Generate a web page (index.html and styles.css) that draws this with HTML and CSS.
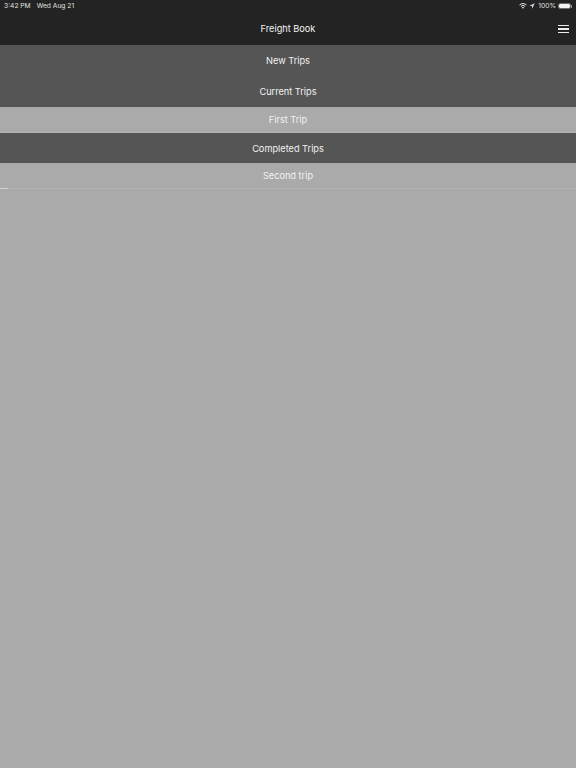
FILE: index.html
```html
<!DOCTYPE html>
<html lang="en">
<head>
<meta charset="UTF-8" />
<meta name="viewport" content="width=device-width, initial-scale=1" />
<title>Freight Book</title>
<link rel="stylesheet" href="styles.css">
</head>
<body>

<div class="topbar">
  <div class="status">
    <div class="status-time">
      <span>3:42 PM</span>
      <span>Wed Aug 21</span>
    </div>
    <div class="status-right">
      <svg class="icon-wifi" viewBox="0 0 16 12" aria-hidden="true">
        <path d="M1 4 A10 10 0 0 1 15 4" fill="none" stroke="#e8e8e8" stroke-width="2"/>
        <path d="M3.8 6.8 A6 6 0 0 1 12.2 6.8" fill="none" stroke="#e8e8e8" stroke-width="2"/>
        <path d="M8 11.5 L5.6 9 A3.4 3.4 0 0 1 10.4 9 Z" fill="#e8e8e8"/>
      </svg>
      <svg class="icon-location" viewBox="0 0 8 8" aria-hidden="true">
        <path d="M7.6 0.4 L0.4 3.7 L3.9 4.1 L4.3 7.6 Z" fill="#d8d8d8"/>
      </svg>
      <span>100%</span>
      <div class="battery"></div>
      <div class="battery-tip"></div>
    </div>
  </div>
  <div class="navbar">
    <span class="navbar-title">Freight Book</span>
    <button class="menu-btn" aria-label="Menu">
      <span></span><span></span><span></span>
    </button>
  </div>
</div>

<div class="section section-first">New Trips</div>
<div class="section section-last">Current Trips</div>
<div class="trip">First Trip</div>
<div class="section section-single">Completed Trips</div>
<div class="trip trip-last">Second trip</div>

</body>
</html>
```

FILE: styles.css
```css
* {
  box-sizing: border-box;
}
html, body {
  height: 100%;
}
body {
  margin: 0;
  background: #aaaaaa;
  color: #f2f2f2;
  font-family: "Inter", "Liberation Sans", sans-serif;
  overflow: hidden;
}

/* TOP BAR */
.topbar {
  height: 45px;
  background: #232323;
}
.status {
  height: 12px;
  display: flex;
  justify-content: space-between;
  align-items: center;
  padding: 0 4px;
  font-size: 6.7px;
  color: #e0e0e0;
}
.status-time {
  display: flex;
  gap: 6px;
}
.status-right {
  display: flex;
  align-items: center;
}
.icon-wifi {
  width: 8px;
  height: 6px;
  margin-right: 2px;
}
.icon-location {
  width: 6px;
  height: 6px;
  margin-right: 3px;
}
.battery {
  width: 13px;
  height: 6px;
  margin-left: 2px;
  background: #f4f4f4;
  border: 1px solid #6e6e6e;
  border-radius: 2px;
  background-clip: padding-box;
}
.battery-tip {
  width: 1px;
  height: 3px;
  background: #8a8a8a;
}
.navbar {
  height: 33px;
  display: flex;
  align-items: center;
  justify-content: center;
  position: relative;
}
.navbar-title {
  font-size: 9.2px;
}
.menu-btn {
  position: absolute;
  right: 7px;
  top: 13px;
  width: 11px;
  height: 8px;
  padding: 0;
  border: none;
  background: none;
  display: flex;
  flex-direction: column;
  justify-content: space-between;
}
.menu-btn span {
  display: block;
  height: 1.3px;
  background: #ececec;
}

/* LIST */
.section,
.trip {
  display: flex;
  align-items: center;
  justify-content: center;
  font-size: 9.2px;
}
.section {
  background: #555555;
}
.section-first {
  height: 31px;
}
.section-last {
  height: 31px;
}
.section-single {
  height: 30px;
}
.trip {
  height: 26px;
  background: #aaaaaa;
  border-bottom: 1px solid #b4b4b4;
  position: relative;
}
.trip-last::after {
  content: "";
  position: absolute;
  left: 0;
  bottom: -1px;
  width: 8px;
  height: 1px;
  background: #d0d0d0;
}
```
